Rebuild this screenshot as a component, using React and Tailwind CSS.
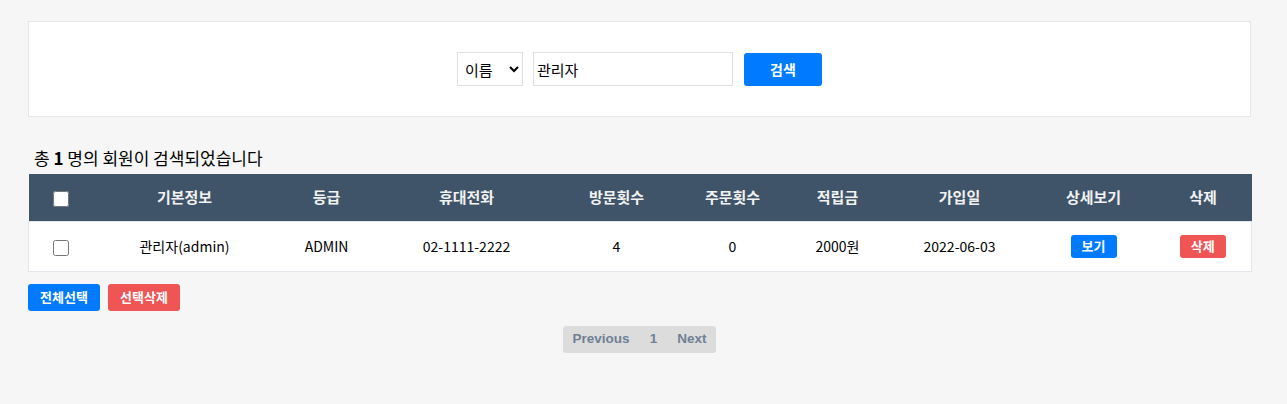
import { useState } from 'react';

const font = { fontFamily: '"Noto Sans CJK KR", "Noto Sans", sans-serif' };

const columns = [
  { key: 'check', label: '', w: 'w-[64px]' },
  { key: 'info', label: '기본정보', w: 'w-[184px]' },
  { key: 'grade', label: '등급', w: 'w-[100px]' },
  { key: 'phone', label: '휴대전화', w: 'w-[180px]' },
  { key: 'visit', label: '방문횟수', w: 'w-[120px]' },
  { key: 'order', label: '주문횟수', w: 'w-[112px]' },
  { key: 'point', label: '적립금', w: 'w-[98px]' },
  { key: 'date', label: '가입일', w: 'w-[146px]' },
  { key: 'detail', label: '상세보기', w: 'w-[122px]' },
  { key: 'del', label: '삭제', w: 'w-[97px]' },
];

const members = [
  { id: 'admin', name: '관리자', grade: 'ADMIN', phone: '02-1111-2222', visit: 4, order: 0, point: '2000원', date: '2022-06-03' },
];

export default function App() {
  const [field, setField] = useState('name');
  const [keyword, setKeyword] = useState('관리자');

  return (
    <div className="min-h-[404px] bg-[#f6f6f6] pl-[28px] pt-[21px] text-black" style={font}>
      <div className="w-[1223px]">
        {/* 검색 영역 */}
        <div className="h-[96px] bg-white border border-[#e3e6ea] flex items-center justify-center">
          <div className="flex items-center">
            <select
              value={field}
              onChange={e => setField(e.target.value)}
              className="h-[34px] w-[66px] border border-[#dcdfe4] bg-white pl-[3px] text-[15px]"
            >
              <option value="name">이름</option>
              <option value="id">아이디</option>
            </select>
            <input
              value={keyword}
              onChange={e => setKeyword(e.target.value)}
              className="ml-[10px] h-[34px] w-[200px] border border-[#dcdfe4] px-[3px] text-[15px] outline-none"
            />
            <button className="ml-[11px] h-[33px] w-[78px] rounded-[3px] bg-[#007bff] text-[14px] font-bold text-white">
              검색
            </button>
          </div>
        </div>

        <p className="mt-[29px] pl-[6px] text-[17px] leading-[24px]">
          총 <b>1</b> 명의 회원이 검색되었습니다
        </p>

        <table className="mt-[4px] w-[1223px] table-fixed border-collapse bg-white text-[14px]">
          <thead>
            <tr className="h-[47px] bg-[#3f5468] text-[#f2f2f2]">
              {columns.map(c => (
                <th key={c.key} className={`${c.w} font-bold text-[15px]`}>
                  {c.key === 'check' ? (
                    <input type="checkbox" className="h-[16px] w-[16px] align-middle" />
                  ) : (
                    c.label
                  )}
                </th>
              ))}
            </tr>
          </thead>
          <tbody>
            {members.map(m => (
              <tr key={m.id} className="h-[50px] border border-[#e3e6ea] text-center">
                <td><input type="checkbox" className="h-[16px] w-[16px] align-middle" /></td>
                <td>{m.name}({m.id})</td>
                <td>{m.grade}</td>
                <td>{m.phone}</td>
                <td>{m.visit}</td>
                <td>{m.order}</td>
                <td>{m.point}</td>
                <td>{m.date}</td>
                <td>
                  <button className="h-[23px] w-[46px] rounded-[3px] bg-[#007bff] text-[13px] font-bold text-white">보기</button>
                </td>
                <td>
                  <button className="h-[23px] w-[46px] rounded-[3px] bg-[#ef5555] text-[13px] font-bold text-white">삭제</button>
                </td>
              </tr>
            ))}
          </tbody>
        </table>

        <div className="mt-[12px] flex gap-[8px]">
          <button className="h-[27px] w-[72px] rounded-[3px] bg-[#007bff] text-[13px] font-bold text-white">전체선택</button>
          <button className="h-[27px] w-[72px] rounded-[3px] bg-[#ef5555] text-[13px] font-bold text-white">선택삭제</button>
        </div>

        <div className="mt-[15px] flex justify-center">
          <div className="flex h-[27px] items-center gap-[20px] rounded-[3px] bg-[#dcdcdc] px-[10px] text-[13.5px] font-bold text-[#6f8096]" style={{ fontFamily: '"Liberation Sans", Arial, sans-serif' }}>
            <span>Previous</span>
            <span>1</span>
            <span>Next</span>
          </div>
        </div>
      </div>
    </div>
  );
}
